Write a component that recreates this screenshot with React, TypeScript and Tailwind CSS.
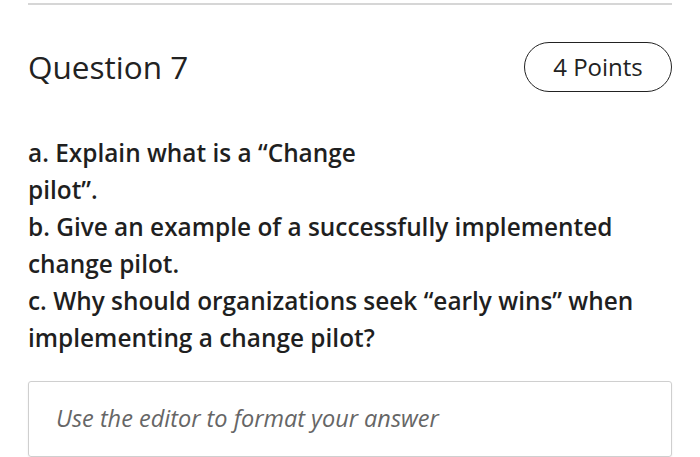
export default function App() {
  return (
    <div className="min-h-screen bg-white px-[28px] text-[#222]" style={{ fontFamily: '"Open Sans", sans-serif' }}>
      <div className="pt-[3px]">
        <div className="h-[2px] bg-[#d6d6d6]" />
      </div>
      <div className="mt-[37px] flex items-center justify-between">
        <h2 className="text-[31.5px] leading-none">Question 7</h2>
        <div className="flex h-[50px] w-[148px] items-center justify-center rounded-full border-[1.5px] border-[#222] text-[24px]">
          4 Points
        </div>
      </div>
      <div className="mt-[42px] text-[24.4px] font-semibold leading-[37px] text-[#1f1f1f]">
        <p>
          a. Explain what is a “Change
          <br />
          pilot”.
        </p>
        <p>b. Give an example of a successfully implemented change pilot.</p>
        <p>c. Why should organizations seek “early wins” when implementing a change pilot?</p>
      </div>
      <div className="mt-[25px] flex h-[76px] items-center rounded-[3px] border border-[#cfcfcf] px-[27px] shadow-[0_1px_2px_rgba(0,0,0,0.08)]">
        <span className="text-[23.5px] italic text-[#666]">Use the editor to format your answer</span>
      </div>
    </div>
  );
}
